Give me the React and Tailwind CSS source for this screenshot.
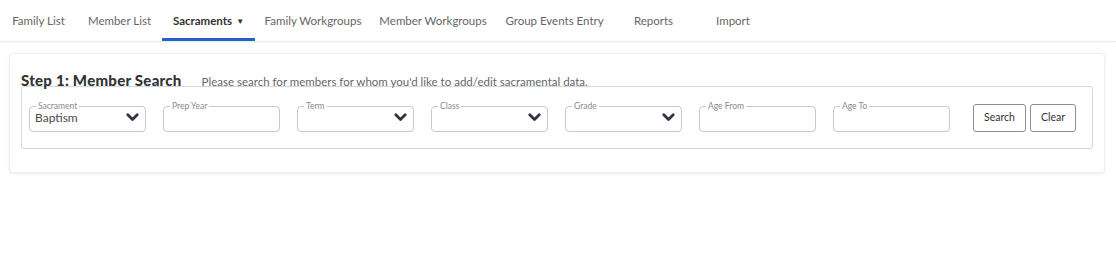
import React from 'react';

const navItems = [
  { label: 'Family List', w: 'w-[77px]' },
  { label: 'Member List', w: 'w-[85px]' },
  { label: 'Sacraments', w: 'w-[93px]', active: true },
  { label: 'Family Workgroups', w: 'w-[116px]' },
  { label: 'Member Workgroups', w: 'w-[124px]' },
  { label: 'Group Events Entry', w: 'w-[119px]' },
  { label: 'Reports', w: 'w-[79px]' },
  { label: 'Import', w: 'w-[80px]' },
];

const Chevron = () => (
  <svg width="13" height="9" viewBox="0 0 13 9" className="shrink-0">
    <polyline points="1.8,1.8 6.5,6.5 11.2,1.8" fill="none" stroke="#2f3441" strokeWidth="2.8" strokeLinecap="round" strokeLinejoin="round" />
  </svg>
);

const Field = ({ label, value, select }) => (
  <fieldset className="w-[117px] h-[30px] border border-[#c9c9c9] rounded-[4px] px-[5px] pb-[3px] flex items-center justify-between">
    <legend className="ml-[1px] px-[2px] text-[8.5px] leading-[8px] text-[#8a8a8a]">{label}</legend>
    <span className="text-[12px] leading-[14px] text-[#4a4a4a] -mt-[3px]">{value}</span>
    {select && <span className="-mt-[3px] mr-[1px]"><Chevron /></span>}
  </fieldset>
);

const App = () => {
  return (
    <div className="w-[1116px] h-[254px] bg-white font-['Lato','Liberation_Sans',sans-serif] text-[#444]">
      <nav className="h-[42px] flex border-b border-[#ececec] shadow-[0_1px_2px_rgba(0,0,0,0.04)]">
        {navItems.map((item) => (
          <div
            key={item.label}
            className={`${item.w} h-full flex items-center justify-center text-[11.5px] ${
              item.active ? 'border-b-[3px] border-[#2462c9] text-[#333] font-bold pt-[3px]' : 'text-[#666]'
            }`}
          >
            {item.label}
            {item.active && <span className="ml-[4px] text-[8px]">▼</span>}
          </div>
        ))}
      </nav>

      <div className="ml-[9px] mr-[11px] mt-[11px] bg-white rounded-[4px] border border-[#f0f0f0] shadow-[0_1px_3px_rgba(0,0,0,0.08)] px-[11px] pt-[18px] pb-[23px]">
        <div className="flex items-baseline -mb-[4px]">
          <h2 className="text-[15px] leading-[16px] font-black text-[#333] tracking-[0.25px]">Step 1: Member Search</h2>
          <span className="ml-[20px] text-[11.5px] text-[#666]">Please search for members for whom you'd like to add/edit sacramental data.</span>
        </div>
        <div className="border border-[#cfd9e5] rounded-[3px] px-[7px] pt-[15px] pb-[16px] flex items-end gap-[17px]">
          <Field label="Sacrament" value="Baptism" select />
          <Field label="Prep Year" />
          <Field label="Term" select />
          <Field label="Class" select />
          <Field label="Grade" select />
          <Field label="Age From" />
          <Field label="Age To" />
          <div className="ml-[6px] flex gap-[4px]">
            <button className="h-[28px] w-[53px] border border-[#8a8c96] rounded-[3px] text-[10.5px] text-[#333] bg-white">Search</button>
            <button className="h-[28px] w-[46px] border border-[#8a8c96] rounded-[3px] text-[10.5px] text-[#333] bg-white">Clear</button>
          </div>
        </div>
      </div>
    </div>
  );
};

export default App;
